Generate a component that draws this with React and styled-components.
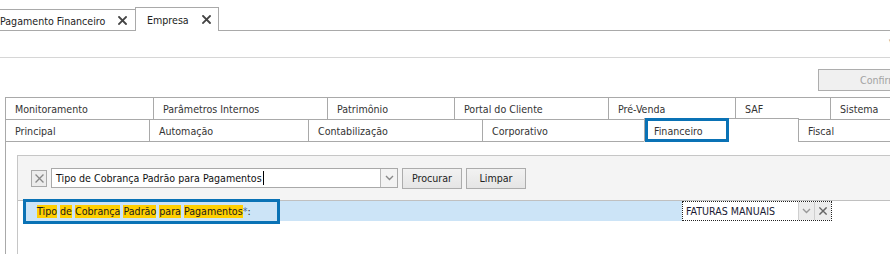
import React from "react";
import styled, { createGlobalStyle } from "styled-components";

const FS = "10.6px";

const Global = createGlobalStyle`
  html, body { margin: 0; padding: 0; background: #fff; }
  body {
    font-family: "DejaVu Sans", "Liberation Sans", sans-serif;
    font-stretch: condensed;
    font-size: ${FS};
    color: #333;
  }
  * { box-sizing: border-box; }
`;

const Page = styled.div`
  width: 890px;
  height: 254px;
  overflow: hidden;
  background: #fff;
`;

const DocTabBar = styled.div`
  display: flex;
  align-items: flex-end;
  height: 31px;
  border-bottom: 1px solid #a9a9a9;
  position: relative;
`;

const DocTab = styled.div`
  display: flex;
  align-items: center;
  flex: none;
  width: ${(p) => p.$w}px;
  height: ${(p) => (p.$active ? 24 : 21)}px;
  margin-bottom: ${(p) => (p.$active ? -1 : 0)}px;
  padding-left: ${(p) => p.$pl}px;
  padding-top: ${(p) => (p.$active ? 0 : 1)}px;
  background: #fff;
  border-top: 1px solid #a9a9a9;
  border-left: ${(p) => (p.$first ? "none" : "1px solid #a9a9a9")};
  border-right: ${(p) => (p.$first ? "none" : "1px solid #a9a9a9")};
  color: #222;
  font-size: ${FS};
  white-space: nowrap;
`;

const DocTabLabel = styled.span`
  flex: 1;
`;

const DocClose = styled.span`
  display: flex;
  width: 9px;
  height: 9px;
  margin-right: ${(p) => p.$mr}px;
`;

const CornerArrow = styled.span`
  position: absolute;
  right: -3px;
  bottom: -16px;
  color: #999;
  font-size: 9px;
`;

const ToolStrip = styled.div`
  height: 27px;
  border-bottom: 1px solid #d6d6d6;
`;

const ActionBar = styled.div`
  display: flex;
  justify-content: flex-start;
  height: 39px;
  padding: 11px 0 0 818px;
`;

const ConfirmButton = styled.div`
  flex: none;
  width: 100px;
  height: 22px;
  border: 1px solid #adadad;
  background: #f0f0f0;
  color: #a3a3a3;
  font-size: ${FS};
  display: flex;
  align-items: center;
  padding-left: 41px;
`;

const TabRows = styled.div`
  padding-left: 5px;
`;

const TabRow = styled.div`
  display: flex;
  align-items: flex-end;
  height: 23px;
  margin-top: ${(p) => (p.$second ? -1 : 0)}px;
`;

const SheetTab = styled.div`
  position: relative;
  flex: none;
  width: ${(p) => p.$w}px;
  height: ${(p) => (p.$active ? 24 : 23)}px;
  margin-left: ${(p) => (p.$first ? 0 : -1)}px;
  border: 1px solid #a9a9a9;
  border-bottom-color: ${(p) => (p.$active ? "#fff" : "#a9a9a9")};
  background: #fff;
  display: flex;
  align-items: center;
  padding-left: 9px;
  padding-top: ${(p) => (p.$active ? 1 : 0)}px;
  color: #333;
  white-space: nowrap;
  font-size: ${FS};
`;

const Callout = styled.div`
  position: absolute;
  left: ${(p) => p.$l}px;
  top: ${(p) => p.$t}px;
  width: ${(p) => p.$w}px;
  height: ${(p) => p.$h}px;
  border: 3px solid #0a72b5;
  pointer-events: none;
`;

const Panel = styled.div`
  margin-left: 5px;
  border-left: 1px solid #a9a9a9;
  height: 120px;
  padding: 13px 0 0 11px;
`;

const InnerBox = styled.div`
  border-top: 1px solid #c6c6c6;
  border-left: 1px solid #c6c6c6;
  height: 120px;
  width: 900px;
`;

const SearchArea = styled.div`
  background: #f4f4f4;
  padding: 12px 0 12px 13px;
  border-bottom: 1px solid #c0c0c0;
`;

const SearchRow = styled.div`
  display: flex;
  align-items: center;
  height: 20px;
`;

const ClearBox = styled.div`
  width: 16px;
  height: 17px;
  border: 1px solid #a9a9a9;
  background: #ececec;
  display: flex;
  align-items: center;
  justify-content: center;
  margin-right: 4px;
`;

const Combo = styled.div`
  display: flex;
  height: 20px;
  width: 347px;
  border: 1px solid #a9a9a9;
  background: #fff;
  margin-right: 4px;
`;

const ComboText = styled.div`
  flex: 1;
  display: flex;
  align-items: center;
  padding-left: 4px;
  color: #111;
  font-size: ${FS};
  white-space: nowrap;
`;

const Caret = styled.span`
  display: inline-block;
  width: 1px;
  height: 14px;
  background: #000;
  margin-left: 1px;
`;

const ComboArrow = styled.div`
  width: 17px;
  border-left: 1px solid #b8b8b8;
  background: #f3f3f3;
  display: flex;
  align-items: center;
  justify-content: center;
`;

const Button = styled.div`
  width: 60px;
  height: 21px;
  border: 1px solid #acacac;
  background: linear-gradient(#f2f2f2, #e5e5e5);
  display: flex;
  align-items: center;
  justify-content: center;
  color: #222;
  font-size: ${FS};
  margin-right: 4px;
`;

const Results = styled.div`
  padding-left: 6px;
`;

const FieldRow = styled.div`
  position: relative;
  display: flex;
  width: 808px;
  height: 20px;
`;

const FieldLabel = styled.div`
  width: 658px;
  background: #cce4f7;
  display: flex;
  align-items: center;
  padding-left: 13px;
  color: #1a1a1a;
  font-size: ${FS};
  white-space: nowrap;
`;

const LabelText = styled.span`
  line-height: 13px;
`;

const Mark = styled.span`
  background: #ffcf00;
  padding-bottom: 1px;
`;

const Req = styled.span`
  color: #4a6a9a;
`;

const Select = styled.div`
  width: 150px;
  display: flex;
  border: 1px dotted #222;
  background: #fff;
`;

const SelectText = styled.div`
  flex: 1;
  display: flex;
  align-items: center;
  padding-left: 3px;
  color: #1a1a33;
  font-size: ${FS};
  white-space: nowrap;
`;

const SelectBtn = styled.div`
  width: ${(p) => p.$w}px;
  background: #ececec;
  border-left: 1px solid #cfcfcf;
  display: flex;
  align-items: center;
  justify-content: center;
`;

const XIcon = ({ size = 9, color = "#333", sw = 1.8 }) => (
  <svg width={size} height={size} viewBox="0 0 9 9">
    <path d="M1 1L8 8M8 1L1 8" stroke={color} strokeWidth={sw} strokeLinecap="square" />
  </svg>
);

const Chevron = ({ color = "#888" }) => (
  <svg width="9" height="6" viewBox="0 0 9 6">
    <path d="M1 1L4.5 4.5L8 1" stroke={color} strokeWidth="1.4" fill="none" />
  </svg>
);

const row1 = [
  ["Monitoramento", 149],
  ["Parâmetros Internos", 175],
  ["Patrimônio", 128],
  ["Portal do Cliente", 155],
  ["Pré-Venda", 128],
  ["SAF", 96],
  ["Sistema", 80],
];
const row2 = [
  ["Principal", 145],
  ["Automação", 160],
  ["Contabilização", 175],
  ["Corporativo", 163],
  ["Financeiro", 155, true],
  ["Fiscal", 110],
];

const words = ["Tipo", "de", "Cobrança", "Padrão", "para", "Pagamentos"];

export default function App() {
  return (
    <Page>
      <Global />
      <DocTabBar>
        <DocTab $first $w={135} $pl={0}>
          <DocTabLabel>Pagamento Financeiro</DocTabLabel>
          <DocClose $mr={8}><XIcon color="#444" /></DocClose>
        </DocTab>
        <DocTab $active $w={84} $pl={11}>
          <DocTabLabel>Empresa</DocTabLabel>
          <DocClose $mr={7}><XIcon color="#444" /></DocClose>
        </DocTab>
        <CornerArrow>▾</CornerArrow>
      </DocTabBar>
      <ToolStrip />
      <ActionBar>
        <ConfirmButton>Confirmar</ConfirmButton>
      </ActionBar>
      <TabRows>
        <TabRow>
          {row1.map(([t, w], i) => (
            <SheetTab key={t} $w={w} $first={i === 0}>{t}</SheetTab>
          ))}
        </TabRow>
        <TabRow $second>
          {row2.map(([t, w, a], i) => (
            <SheetTab key={t} $w={w} $first={i === 0} $active={a}>
              {t}
              {a && <Callout $l={0} $t={-1} $w={84} $h={24} />}
            </SheetTab>
          ))}
        </TabRow>
      </TabRows>
      <Panel>
        <InnerBox>
          <SearchArea>
            <SearchRow>
              <ClearBox><XIcon size={9} color="#888" sw={1.3} /></ClearBox>
              <Combo>
                <ComboText>Tipo de Cobrança Padrão para Pagamentos<Caret /></ComboText>
                <ComboArrow><Chevron /></ComboArrow>
              </Combo>
              <Button>Procurar</Button>
              <Button>Limpar</Button>
            </SearchRow>
          </SearchArea>
          <Results>
            <FieldRow>
              <FieldLabel>
                <LabelText>
                  {words.map((w, i) => (
                    <React.Fragment key={w}>
                      <Mark>{w}</Mark>
                      {i < words.length - 1 ? " " : ""}
                    </React.Fragment>
                  ))}
                  <Req>*</Req>:
                </LabelText>
              </FieldLabel>
              <Select>
                <SelectText>FATURAS MANUAIS</SelectText>
                <SelectBtn $w={16}><Chevron color="#999" /></SelectBtn>
                <SelectBtn $w={17}><XIcon size={8} color="#666" sw={1.6} /></SelectBtn>
              </Select>
              <Callout $l={-1} $t={-2} $w={257} $h={25} />
            </FieldRow>
          </Results>
        </InnerBox>
      </Panel>
    </Page>
  );
}
